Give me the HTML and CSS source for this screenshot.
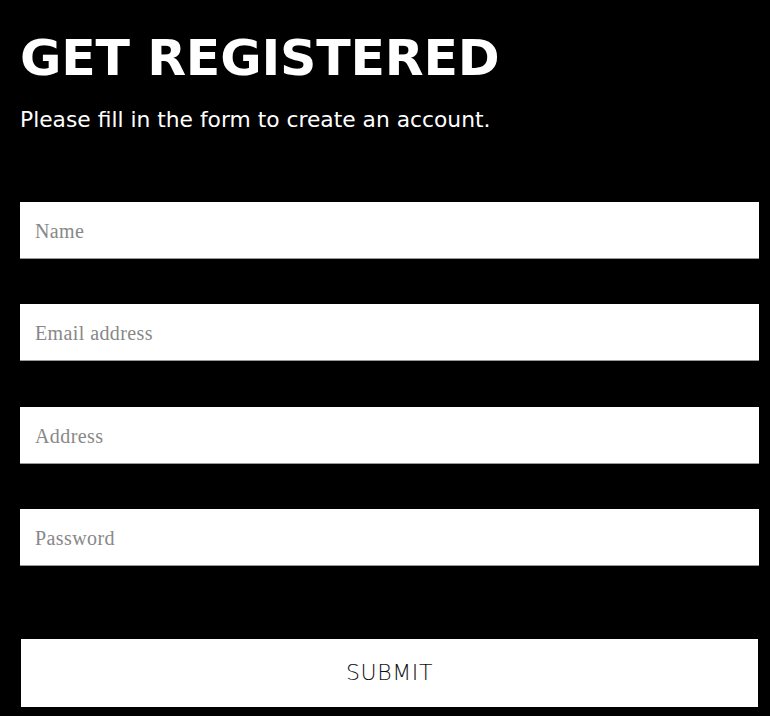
FILE: index.html
```html
<!DOCTYPE html>
<html>
<head>
<meta charset="utf-8">
<link rel="stylesheet" href="styles.css">
</head>
<body>
<div class="page">
  <h1 class="title">GET REGISTERED</h1>
  <p class="lead">Please fill in the form to create an account.</p>
  <form class="form">
    <input class="field" type="text" placeholder="Name">
    <input class="field" type="email" placeholder="Email address">
    <input class="field" type="text" placeholder="Address">
    <input class="field" type="password" placeholder="Password">
    <button class="submit" type="button">SUBMIT</button>
  </form>
</div>
</body>
</html>
```
FILE: styles.css
```css
html, body {
  margin: 0;
  background: #000;
}
.page {
  padding: 26px 11px 0 20px;
}
.title {
  margin: 0;
  font-family: "DejaVu Sans", sans-serif;
  font-weight: bold;
  font-size: 50.5px;
  line-height: 64px;
  letter-spacing: -0.2px;
  color: #fff;
}
.lead {
  margin: 15px 0 0;
  font-family: "DejaVu Sans", sans-serif;
  font-weight: normal;
  font-size: 21.8px;
  line-height: 30px;
  color: #fff;
}
.form {
  display: flex;
  flex-direction: column;
  gap: 45.4px;
  margin-top: 67px;
}
.field {
  box-sizing: border-box;
  height: 57px;
  width: 100%;
  border: none;
  border-bottom: 1px solid #999;
  padding: 3px 15px 0;
  font-family: "Liberation Serif", serif;
  font-size: 20px;
  letter-spacing: 0.4px;
  background: #fff;
  outline: none;
}
.field::placeholder {
  color: #888;
}
.submit {
  margin-top: 26px;
  height: 70px;
  width: 100%;
  box-sizing: border-box;
  border: 1px solid #000;
  background: #fff;
  font-family: "DejaVu Sans", sans-serif;
  font-weight: 300;
  font-size: 22px;
  letter-spacing: 0.6px;
  color: #111;
}
```
